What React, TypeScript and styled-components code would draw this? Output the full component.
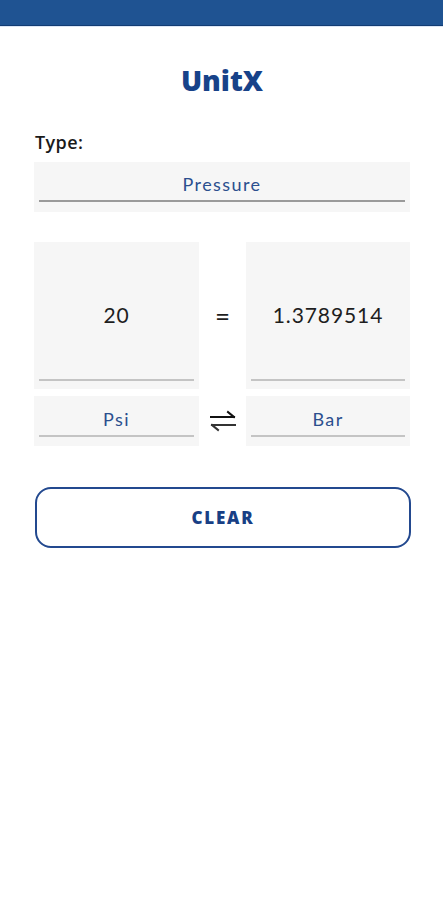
import { useState } from "react";
import styled, { createGlobalStyle } from "styled-components";

const GlobalStyle = createGlobalStyle`
  html, body {
    margin: 0;
    padding: 0;
    background: #ffffff;
  }
  body {
    font-family: "Lato", "Noto Sans", sans-serif;
  }
`;

const SwapIcon = () => (
  <svg width="28" height="22" viewBox="0 0 28 22" fill="none">
    <path d="M2 7H25M19 2L25 7" stroke="#111" strokeWidth="2" strokeLinecap="square" />
    <path d="M26 15H3M9 20L3 15" stroke="#333" strokeWidth="2" strokeLinecap="square" />
  </svg>
);

const App = () => {
  const [value, setValue] = useState("20");
  const result = value === "" ? "" : (Number(value) * 0.06894757).toFixed(7);

  return (
    <>
      <GlobalStyle />
      <Page>
        <TopBar />
        <Content>
          <Title>UnitX</Title>
          <Label>Type:</Label>
          <Select>
            <SelectText>Pressure</SelectText>
          </Select>

          <Grid>
            <ValueBox>
              <ValueInput value={value} onChange={(e) => setValue(e.target.value)} />
            </ValueBox>
            <Middle>=</Middle>
            <ValueBox>
              <ValueText>{result}</ValueText>
            </ValueBox>

            <UnitBox>
              <SelectText>Psi</SelectText>
            </UnitBox>
            <Middle>
              <SwapIcon />
            </Middle>
            <UnitBox>
              <SelectText>Bar</SelectText>
            </UnitBox>
          </Grid>

          <ClearButton type="button" onClick={() => setValue("")}>
            CLEAR
          </ClearButton>
        </Content>
      </Page>
    </>
  );
};

const Page = styled.div`
  width: 443px;
  min-height: 900px;
  background: #ffffff;
`;

const TopBar = styled.div`
  height: 25px;
  background: #1f5392;
  border-bottom: 1px solid #123c73;
  box-shadow: 0 1px 0 #dbe6f5;
`;

const Content = styled.div`
  display: flex;
  flex-direction: column;
  padding: 0 33px 0 34px;
`;

const Title = styled.h1`
  margin: 37px 0 0;
  height: 34px;
  text-align: center;
  font-family: "Open Sans", sans-serif;
  font-weight: 800;
  font-size: 28px;
  line-height: 34px;
  color: #174289;
`;

const Label = styled.div`
  margin-top: 34px;
  padding-left: 1px;
  font-family: "Open Sans", sans-serif;
  font-weight: 600;
  font-size: 18px;
  line-height: 22px;
  letter-spacing: 0.4px;
  color: #1a1a1a;
`;

const Select = styled.div`
  margin-top: 9px;
  height: 50px;
  background: #f6f6f6;
  display: flex;
  align-items: center;
  justify-content: center;
  position: relative;
  padding-bottom: 2px;
  box-sizing: border-box;

  &::after {
    content: "";
    position: absolute;
    left: 5px;
    right: 5px;
    bottom: 10px;
    height: 2px;
    background: #9a9a9a;
  }
`;

const SelectText = styled.span`
  font-size: 18px;
  color: #2b4f8e;
  letter-spacing: 1.4px;
  margin-top: -4px;
`;

const Grid = styled.div`
  margin-top: 30px;
  display: grid;
  grid-template-columns: 165px 1fr 164px;
  grid-template-rows: 147px 50px;
  row-gap: 7px;
`;

const FieldBox = styled.div`
  background: #f6f6f6;
  position: relative;
  display: flex;
  align-items: center;
  justify-content: center;

  &::after {
    content: "";
    position: absolute;
    left: 5px;
    right: 5px;
    bottom: 8px;
    height: 2px;
    background: #c4c4c4;
  }
`;

const ValueBox = styled(FieldBox)`
  padding-bottom: 0;
`;

const UnitBox = styled(FieldBox)`
  &::after {
    bottom: 9px;
  }
`;

const valueFont = `
  font-family: "Lato", sans-serif;
  font-size: 21px;
  color: #1e1e1e;
  letter-spacing: 0.9px;
`;

const ValueInput = styled.input`
  ${valueFont}
  width: 100%;
  border: none;
  outline: none;
  background: transparent;
  text-align: center;
  padding: 0;
  margin-bottom: 2px;
`;

const ValueText = styled.span`
  ${valueFont}
  margin-bottom: 2px;
`;

const Middle = styled.div`
  display: flex;
  align-items: center;
  justify-content: center;
  font-size: 26px;
  color: #1e1e1e;
`;

const ClearButton = styled.button`
  margin-top: 41px;
  height: 61px;
  width: 376px;
  margin-left: 1px;
  border: 2px solid #23498f;
  border-radius: 16px;
  background: #ffffff;
  font-family: "Open Sans", sans-serif;
  font-weight: 800;
  font-size: 17px;
  letter-spacing: 1.8px;
  color: #183f85;
  cursor: pointer;
`;

export default App;
